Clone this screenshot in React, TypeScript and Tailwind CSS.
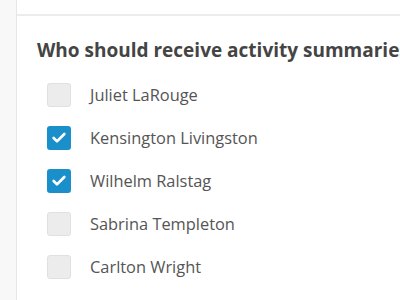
import { Check } from "lucide-react";

const PEOPLE = [
  { name: "Juliet LaRouge", checked: false },
  { name: "Kensington Livingston", checked: true },
  { name: "Wilhelm Ralstag", checked: true },
  { name: "Sabrina Templeton", checked: false },
  { name: "Carlton Wright", checked: false },
];

export default function App() {
  return (
    <div
      className="flex h-[300px] w-[400px] overflow-hidden bg-white"
      style={{ fontFamily: '"Open Sans", sans-serif' }}
    >
      <div className="w-[17px] shrink-0 border-r border-[#e6e6e6] bg-[#f8f8f8]" />
      <div className="flex min-w-0 flex-1 flex-col">
        <div className="h-[16px] shrink-0 border-b-2 border-[#ececec]" />
        <div className="pl-[20px] pt-[20px]">
          <h2 className="whitespace-nowrap text-[19px] font-bold leading-7 text-[#444]">
            Who should receive activity summaries?
          </h2>
          <ul className="mt-[19px] flex flex-col gap-[19px]">
            {PEOPLE.map((p) => (
              <li key={p.name} className="flex items-center gap-[19px] pl-[10px]">
                {p.checked ? (
                  <span className="grid h-6 w-6 place-items-center rounded-[3px] bg-[#1b8fca]">
                    <Check className="h-4 w-4 text-white" strokeWidth={4} />
                  </span>
                ) : (
                  <span className="h-6 w-6 rounded-[3px] border border-[#e0e0e0] bg-[#ececec]" />
                )}
                <span className="text-[16.4px] leading-6 text-[#555]">{p.name}</span>
              </li>
            ))}
          </ul>
        </div>
      </div>
    </div>
  );
}
